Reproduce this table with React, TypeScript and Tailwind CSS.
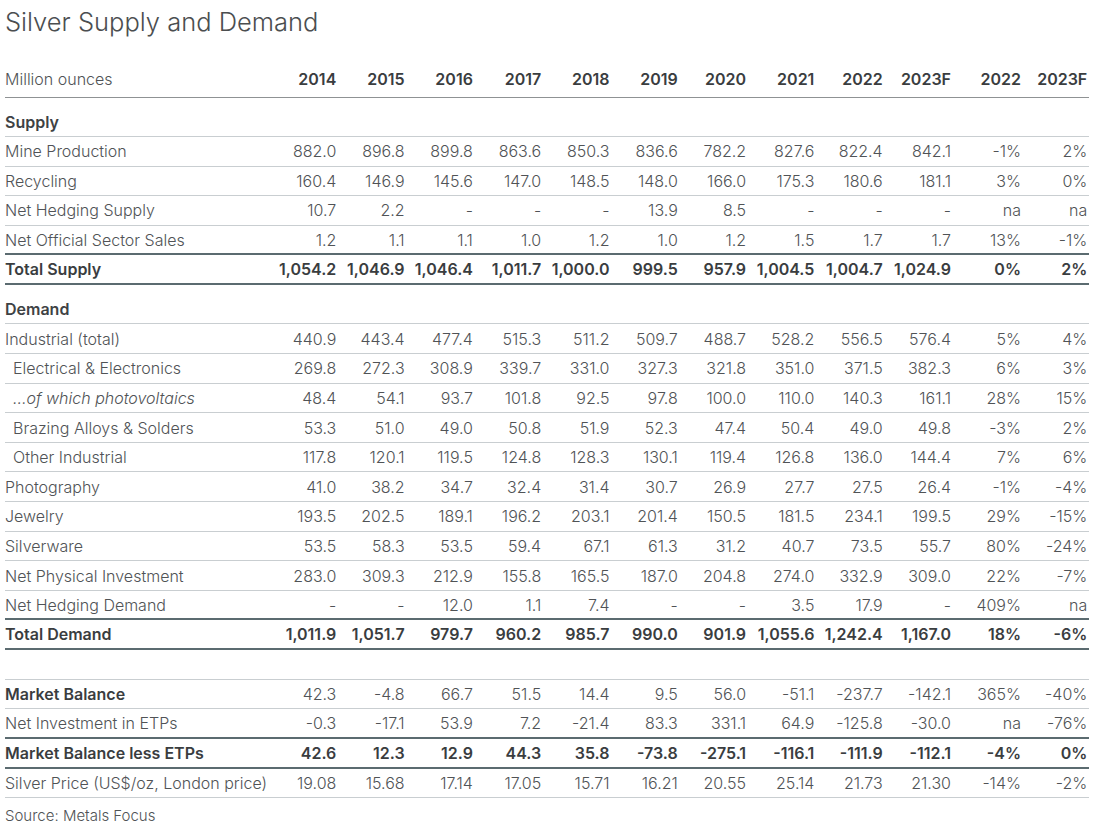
import React from "react"

type Line = "light" | "dark" | "mid" | "none"

interface Row {
  label: string
  values?: string[]
  bold?: boolean
  boldLabel?: boolean
  indent?: boolean
  italic?: boolean
  section?: boolean
  spacer?: boolean
  line: Line
}

const years = ["2014", "2015", "2016", "2017", "2018", "2019", "2020", "2021", "2022", "2023F", "2022", "2023F"]

const rows: Row[] = [
  { label: "Supply", section: true, line: "light" },
  { label: "Mine Production", values: ["882.0", "896.8", "899.8", "863.6", "850.3", "836.6", "782.2", "827.6", "822.4", "842.1", "-1%", "2%"], line: "light" },
  { label: "Recycling", values: ["160.4", "146.9", "145.6", "147.0", "148.5", "148.0", "166.0", "175.3", "180.6", "181.1", "3%", "0%"], line: "light" },
  { label: "Net Hedging Supply", values: ["10.7", "2.2", "-", "-", "-", "13.9", "8.5", "-", "-", "-", "na", "na"], line: "light" },
  { label: "Net Official Sector Sales", values: ["1.2", "1.1", "1.1", "1.0", "1.2", "1.0", "1.2", "1.5", "1.7", "1.7", "13%", "-1%"], line: "dark" },
  { label: "Total Supply", bold: true, values: ["1,054.2", "1,046.9", "1,046.4", "1,011.7", "1,000.0", "999.5", "957.9", "1,004.5", "1,004.7", "1,024.9", "0%", "2%"], line: "dark" },
  { label: "Demand", section: true, line: "light" },
  { label: "Industrial (total)", values: ["440.9", "443.4", "477.4", "515.3", "511.2", "509.7", "488.7", "528.2", "556.5", "576.4", "5%", "4%"], line: "light" },
  { label: "Electrical & Electronics", indent: true, values: ["269.8", "272.3", "308.9", "339.7", "331.0", "327.3", "321.8", "351.0", "371.5", "382.3", "6%", "3%"], line: "light" },
  { label: "…of which photovoltaics", indent: true, italic: true, values: ["48.4", "54.1", "93.7", "101.8", "92.5", "97.8", "100.0", "110.0", "140.3", "161.1", "28%", "15%"], line: "light" },
  { label: "Brazing Alloys & Solders", indent: true, values: ["53.3", "51.0", "49.0", "50.8", "51.9", "52.3", "47.4", "50.4", "49.0", "49.8", "-3%", "2%"], line: "light" },
  { label: "Other Industrial", indent: true, values: ["117.8", "120.1", "119.5", "124.8", "128.3", "130.1", "119.4", "126.8", "136.0", "144.4", "7%", "6%"], line: "light" },
  { label: "Photography", values: ["41.0", "38.2", "34.7", "32.4", "31.4", "30.7", "26.9", "27.7", "27.5", "26.4", "-1%", "-4%"], line: "light" },
  { label: "Jewelry", values: ["193.5", "202.5", "189.1", "196.2", "203.1", "201.4", "150.5", "181.5", "234.1", "199.5", "29%", "-15%"], line: "light" },
  { label: "Silverware", values: ["53.5", "58.3", "53.5", "59.4", "67.1", "61.3", "31.2", "40.7", "73.5", "55.7", "80%", "-24%"], line: "light" },
  { label: "Net Physical Investment", values: ["283.0", "309.3", "212.9", "155.8", "165.5", "187.0", "204.8", "274.0", "332.9", "309.0", "22%", "-7%"], line: "light" },
  { label: "Net Hedging Demand", values: ["-", "-", "12.0", "1.1", "7.4", "-", "-", "3.5", "17.9", "-", "409%", "na"], line: "dark" },
  { label: "Total Demand", bold: true, values: ["1,011.9", "1,051.7", "979.7", "960.2", "985.7", "990.0", "901.9", "1,055.6", "1,242.4", "1,167.0", "18%", "-6%"], line: "dark" },
  { label: "", spacer: true, line: "light" },
  { label: "Market Balance", boldLabel: true, values: ["42.3", "-4.8", "66.7", "51.5", "14.4", "9.5", "56.0", "-51.1", "-237.7", "-142.1", "365%", "-40%"], line: "light" },
  { label: "Net Investment in ETPs", values: ["-0.3", "-17.1", "53.9", "7.2", "-21.4", "83.3", "331.1", "64.9", "-125.8", "-30.0", "na", "-76%"], line: "dark" },
  { label: "Market Balance less ETPs", bold: true, values: ["42.6", "12.3", "12.9", "44.3", "35.8", "-73.8", "-275.1", "-116.1", "-111.9", "-112.1", "-4%", "0%"], line: "dark" },
  { label: "Silver Price (US$/oz, London price)", values: ["19.08", "15.68", "17.14", "17.05", "15.71", "16.21", "20.55", "25.14", "21.73", "21.30", "-14%", "-2%"], line: "light" },
]

const lineClass: Record<Line, string> = {
  light: "border-b border-[#c9ced1]",
  dark: "border-b-2 border-[#5b6b70]",
  mid: "border-b border-[#8f9294]",
  none: "",
}

const grid = "grid grid-cols-[265px_repeat(10,68.3px)_70px_66.3px] w-[1084.3px]"
const strong = "font-semibold text-[#3a3d3f]"
const plain = "font-light text-[#505356]"

function DataRow({ row }: { row: Row }) {
  // section headers are taller, with the text near the bottom
  if (row.section) {
    return (
      <div className={`${grid} h-[39.5px] pt-[10px] items-center ${lineClass[row.line]}`}>
        <div className="font-semibold text-[#3e4244]">{row.label}</div>
      </div>
    )
  }
  if (row.spacer) {
    return <div className={`w-[1084.3px] h-[29.8px] ${lineClass[row.line]}`} />
  }
  const labelWeight = row.bold || row.boldLabel ? strong : plain
  const valueWeight = row.bold ? strong : plain
  return (
    <div className={`${grid} h-[29.6px] items-center ${lineClass[row.line]}`}>
      <div className={`${labelWeight} ${row.indent ? "pl-[8px]" : ""} ${row.italic ? "italic" : ""} whitespace-nowrap`}>{row.label}</div>
      {row.values?.map((v, i) => (
        <div key={i} className={`${valueWeight} text-right pr-[2px] whitespace-nowrap`}>{v}</div>
      ))}
    </div>
  )
}

export default function App() {
  return (
    <div className="w-[1102px] h-[832px] bg-white pl-[5px] pt-[7px] text-[16px] font-['Inter',sans-serif]">
      <h1 className="text-[25.5px] leading-[30px] font-light text-[#4b4e50]">Silver Supply and Demand</h1>

      <div className="mt-[30px]">
        {/* Header */}
        <div className={`${grid} h-[30.5px] pb-[8px] items-center ${lineClass.mid}`}>
          <div className={plain}>Million ounces</div>
          {years.map((y, i) => (
            <div key={i} className={`text-right pr-[2px] ${strong}`}>{y}</div>
          ))}
        </div>

        {rows.map((row, i) => (
          <DataRow key={i} row={row} />
        ))}
      </div>

      <p className="mt-[7px] text-[15px] font-light text-[#505356]">Source: Metals Focus</p>
    </div>
  )
}
